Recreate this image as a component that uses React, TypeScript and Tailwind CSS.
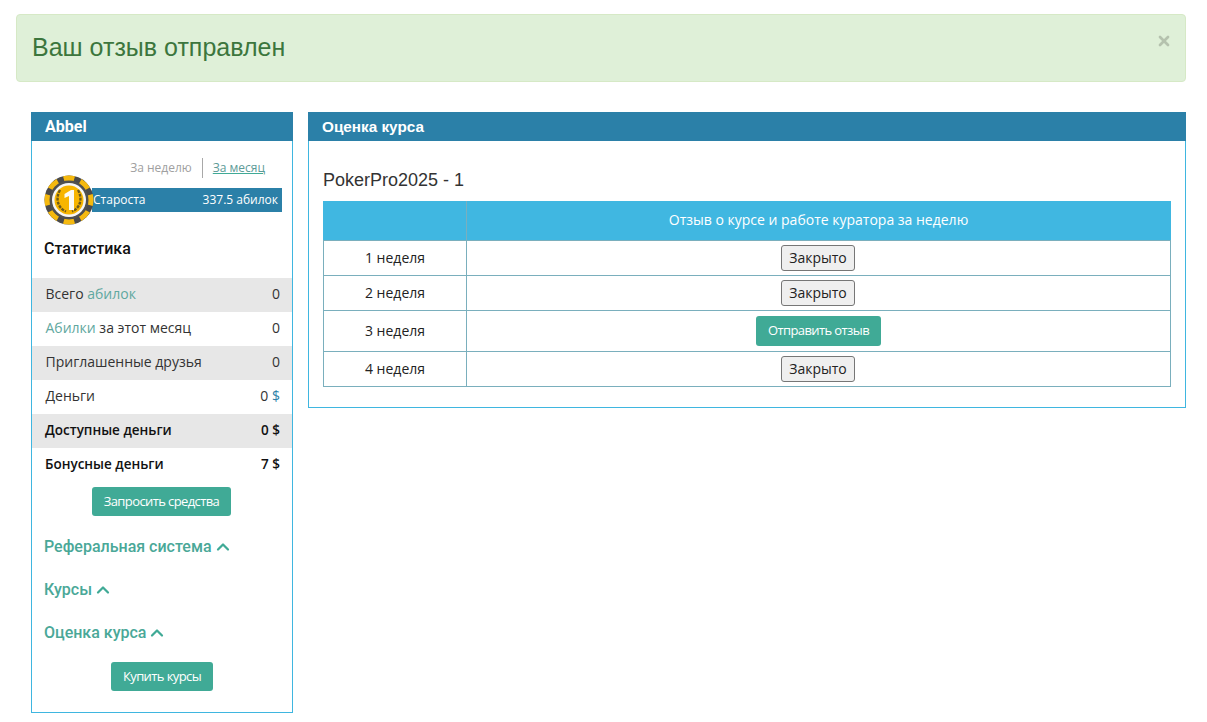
import { ChevronUp, X } from "lucide-react";

const STATS = [
  { label: <>Всего <span className="text-[#5fa8a0]">абилок</span></>, value: <>0</> },
  { label: <><span className="text-[#5fa8a0]">Абилки</span> за этот месяц</>, value: <>0</> },
  { label: <>Приглашенные друзья</>, value: <>0</> },
  { label: <>Деньги</>, value: <>0 <span className="text-[#2b80a8]">$</span></> },
  { label: <>Доступные деньги</>, value: <>0 $</>, bold: true },
  { label: <>Бонусные деньги</>, value: <>7 $</>, bold: true },
];

const WEEKS = [
  { name: "1 неделя", open: false },
  { name: "2 неделя", open: false },
  { name: "3 неделя", open: true },
  { name: "4 неделя", open: false },
];

function Chip() {
  const notches = [0, 45, 90, 135, 180, 225, 270, 315];
  return (
    <svg width="50" height="50" viewBox="0 0 50 50" className="relative z-10 shrink-0">
      <circle cx="25" cy="25" r="24.5" fill="#4a4a4a" />
      {notches.map((a) => (
        <path
          key={a}
          d="M19 1.3 A24.5 24.5 0 0 1 31 1.3 L29.5 6.5 A19 19 0 0 0 20.5 6.5 Z"
          fill="#f5b90f"
          transform={`rotate(${a} 25 25)`}
        />
      ))}
      <circle cx="25" cy="25" r="19.5" fill="#505050" />
      <circle cx="25" cy="25" r="17" fill="#f6f6f6" />
      <circle cx="25" cy="25" r="14.5" fill="#f7b500" />
      <path d="M16 15 C11 24 14 33 22 36.5" fill="none" stroke="#6b5a1c" strokeWidth="2.4" strokeDasharray="3 1" />
      <path d="M34 15 C39 24 36 33 28 36.5" fill="none" stroke="#6b5a1c" strokeWidth="2.4" strokeDasharray="3 1" />
      <path d="M20.5 19 L27 15 L30 15 L30 35 L25 35 L25 21 L20.5 23 Z" fill="#fbfbf6" />
    </svg>
  );
}

function TealButton({ children, className }: { children: string; className: string }) {
  return (
    <button
      type="button"
      className={`h-[29px] rounded-[3px] bg-[#40aa96] text-[13px] tracking-[-0.6px] text-white ${className}`}
    >
      {children}
    </button>
  );
}

function Section({ title }: { title: string }) {
  return (
    <div className="flex h-[43px] items-center gap-[1px] pb-[1px] pl-[12px] font-['Roboto',sans-serif] text-[16px] font-medium text-[#4aa898]">
      {title}
      <ChevronUp size={20} strokeWidth={2.7} className="text-[#40aa96]" />
    </div>
  );
}

export default function App() {
  return (
    <div className="h-[722px] overflow-hidden bg-white font-['Open_Sans',sans-serif] text-[14px] text-[#222]">
      {/* Alert */}
      <div className="mx-[21px] mt-[14px] ml-[16px] flex h-[68px] items-start justify-between rounded border border-[#d6e9c6] bg-[#dff0d8] pl-[15px] pr-[13px] font-['Liberation_Sans',sans-serif] text-[#3c763d]">
        <div className="mt-[17px] text-[25px] leading-[30px]">Ваш отзыв отправлен</div>
        <X size={16} strokeWidth={4} className="mt-[18px] text-[#b5c2ae]" />
      </div>

      <div className="mt-[30px] flex items-start pl-[31px] pr-[21px]">
        {/* Sidebar */}
        <aside className="h-[601px] w-[262px] shrink-0 border border-t-0 border-[#3fb6e0]">
          <div className="-mx-px flex h-[29px] items-center bg-[#2b80a8] pl-[14px] font-['Roboto',sans-serif] text-[16px] font-bold text-white">
            Abbel
          </div>

          <div className="mt-[17px] flex h-[20px] items-center justify-end pr-[27px] text-[12px]">
            <span className="pr-[10px] text-[#a0a0a0]">За неделю</span>
            <span className="border-l border-[#a8a8a8] pl-[10px] text-[#5d9b98] underline decoration-[#40aa96] leading-[20px]">
              За месяц
            </span>
          </div>

          <div className="mt-[-3px] flex items-center pl-[12px] pr-[10px]">
            <Chip />
            <div className="-ml-[2px] flex h-[24px] flex-1 items-center justify-between bg-[#2b80a8] pl-[1px] pr-[4px] text-[12px] text-white">
              <span>Староста</span>
              <span>337.5 абилок</span>
            </div>
          </div>

          <div className="mt-[10px] pl-[12px] font-['Roboto',sans-serif] text-[16px] font-medium leading-[28px] text-[#111]">
            Статистика
          </div>

          <div className="mt-[15px]">
            {STATS.map((row, i) => (
              <div
                key={i}
                className={`flex h-[34px] items-center justify-between pr-[12px] ${
                  i % 2 === 0 ? "bg-[#e7e7e7]" : "bg-white"
                } ${row.bold ? "pb-[1px] pl-[13px] text-[13.5px] font-semibold text-[#111]" : "pb-[3px] pl-[13.5px] text-[14px] text-[#333]"}`}
              >
                <span>{row.label}</span>
                <span>{row.value}</span>
              </div>
            ))}
          </div>

          <div className="mt-[5px] flex justify-center pr-[1px]">
            <TealButton className="w-[139px]">Запросить средства</TealButton>
          </div>

          <div className="mt-[10px]">
            <Section title="Реферальная система" />
            <Section title="Курсы" />
            <Section title="Оценка курса" />
          </div>

          <div className="mt-[7px] flex justify-center">
            <TealButton className="w-[102px]">Купить курсы</TealButton>
          </div>
        </aside>

        {/* Main */}
        <main className="ml-[15px] h-[296px] flex-1 border border-t-0 border-[#3fb6e0]">
          <div className="-mx-px flex h-[29px] items-center bg-[#2b80a8] pl-[14px] pt-[1px] font-['Liberation_Sans',sans-serif] text-[15.3px] font-bold text-white">
            Оценка курса
          </div>
          <div className="px-[14px]">
            <div className="mt-[26px] h-[34px] font-['Liberation_Sans',sans-serif] text-[18px] leading-[26px] text-[#333]">
              PokerPro2025 - 1
            </div>
            <table className="w-full table-fixed border-collapse">
              <thead>
                <tr className="h-[39px] bg-[#40b7e1] text-white">
                  <th className="w-[143px] border border-[#7aafbd] border-t-[#40b7e1] border-l-[#40b7e1] font-normal"></th>
                  <th className="border border-[#7aafbd] border-t-[#40b7e1] border-r-[#40b7e1] pb-[3px] font-normal">
                    Отзыв о курсе и работе куратора за неделю
                  </th>
                </tr>
              </thead>
              <tbody>
                {WEEKS.map((w) => (
                  <tr key={w.name} className={w.open ? "h-[41px]" : "h-[35px]"}>
                    <td className="border border-[#7aafbd] p-0 pb-[2px] text-center">{w.name}</td>
                    <td className="border border-[#7aafbd] p-0 text-center align-middle">
                      {w.open ? (
                        <TealButton className="mx-auto block h-[30px] w-[125px]">Отправить отзыв</TealButton>
                      ) : (
                        <button
                          type="button"
                          className="mx-auto block h-[26px] w-[74px] -translate-x-px rounded-[3px] border border-[#767676] bg-[#efefef] pb-[2px] pl-[1px] text-[14px] text-[#222]"
                        >
                          Закрыто
                        </button>
                      )}
                    </td>
                  </tr>
                ))}
              </tbody>
            </table>
          </div>
        </main>
      </div>
    </div>
  );
}
